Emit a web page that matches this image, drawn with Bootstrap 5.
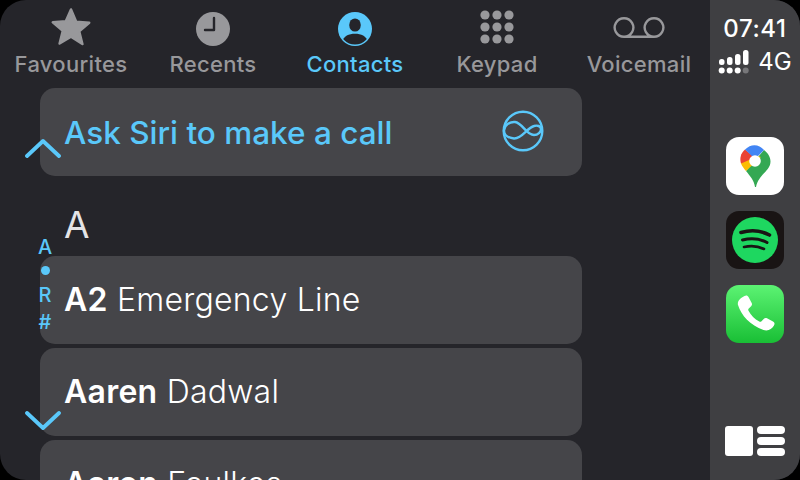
<!DOCTYPE html>
<html lang="en">
<head>
<meta charset="UTF-8" />
<title>Contacts</title>
<meta name="viewport" content="width=device-width, initial-scale=1.0" />
<link href="https://cdn.jsdelivr.net/npm/bootstrap@5.3.0/dist/css/bootstrap.min.css" rel="stylesheet" />
<style>
html, body { width: 800px; height: 480px; overflow: hidden; background: #000; font-family: Inter, "Liberation Sans", sans-serif; }
.carplay { width: 800px; height: 480px; border-radius: 26px; overflow: hidden; background: #25252a; }
.phone-pane { width: 710px; height: 480px; overflow: hidden; }
.tab-item { width: 142px; height: 88px; color: #98989b; padding-top: 8px; }
.tab-item.on { color: #5ac8fa; }
.tab-icon { height: 40px; }
.tab-label { font-size: 22px; font-weight: 500; line-height: 32px; letter-spacing: .3px; white-space: nowrap; }
.contact-list { padding-left: 40px; width: 582px; }
.contact-row { height: 88px; border-radius: 15px; background: #454549; color: #fff; font-size: 32px; font-weight: 300; letter-spacing: .25px; padding: 0 25px 0 24px; margin-bottom: 4px; white-space: nowrap; flex: none; }
.contact-row b { font-weight: 600; }
.siri-row { color: #5ac8fa; font-size: 31.5px; font-weight: 500; letter-spacing: 0; margin-bottom: 0; padding-top: 2px; }
.siri-icon { margin-right: 13px; margin-top: -5px; }
.letter-head { height: 80px; padding: 27px 0 0 24px; color: #e4e4e6; font-size: 37px; line-height: 44px; font-weight: 400; }
.scroll-up, .scroll-down { position: absolute; left: 25px; width: 36px; height: 20px; }
.scroll-up { top: 138px; }
.scroll-down { top: 411px; }
.index-strip { position: absolute; left: 30px; top: 234px; width: 30px; color: #5ac8fa; font-size: 20px; font-weight: 500; line-height: 27px; }
.index-dot { width: 9px; height: 9px; border-radius: 50%; background: #5ac8fa; margin: 5px 0 7px; }
.side-bar { width: 90px; height: 480px; background: #3f3f42; color: #fff; padding-top: 11px; }
.clock { font-size: 24px; line-height: 36px; font-weight: 500; letter-spacing: .6px; }
.signal-line { height: 30px; font-size: 24px; line-height: 30px; gap: 6px; }
.app-tile { width: 58px; height: 58px; border-radius: 13px; overflow: hidden; display: block; }
.app-stack { margin-top: 60px; gap: 16px; }
.layout-btn { margin-top: auto; margin-bottom: 24px; }
</style>
</head>
<body>
<div class="carplay d-flex position-relative">
  <div class="phone-pane position-relative">
    <div class="d-flex">
      <div class="tab-item d-flex flex-column align-items-center">
        <svg class="tab-icon" width="40" height="40" viewBox="0 0 40 40"><path fill="#98989b" stroke="#98989b" stroke-width="2.5" stroke-linejoin="round" d="M20 1.5l5.2 12.2 13 1-10 8.5 3.2 12.8L20 28.6 8.6 35.5l3.2-12.8-10-8.5 13-1z"/></svg>
        <div class="tab-label">Favourites</div>
      </div>
      <div class="tab-item d-flex flex-column align-items-center">
        <svg class="tab-icon" width="40" height="40" viewBox="0 0 40 40"><circle cx="20" cy="21" r="17" fill="#98989b"/><path d="M21 10v12h-9" fill="none" stroke="#25252a" stroke-width="2.4" stroke-linecap="round" stroke-linejoin="round"/></svg>
        <div class="tab-label">Recents</div>
      </div>
      <div class="tab-item on d-flex flex-column align-items-center">
        <svg class="tab-icon" width="40" height="40" viewBox="0 0 40 40"><defs><clipPath id="avatarClip"><circle cx="20" cy="21" r="15.500"/></clipPath></defs><circle cx="20" cy="21" r="17" fill="#5ac8fa"/><g clip-path="url(#avatarClip)" fill="#25252a"><ellipse cx="20" cy="17" rx="5.800" ry="6.600"/><path d="M7 34c1.500-6 7-8.200 13-8.200S31.500 28 33 34c-3 4-8 5-13 5s-10-1-13-5z"/></g></svg>
        <div class="tab-label">Contacts</div>
      </div>
      <div class="tab-item d-flex flex-column align-items-center">
        <svg class="tab-icon" width="40" height="40" viewBox="0 0 40 40" fill="#98989b"><circle cx="8" cy="7" r="4.600"/><circle cx="20" cy="7" r="4.600"/><circle cx="32" cy="7" r="4.600"/><circle cx="8" cy="19" r="4.600"/><circle cx="20" cy="19" r="4.600"/><circle cx="32" cy="19" r="4.600"/><circle cx="8" cy="31" r="4.600"/><circle cx="20" cy="31" r="4.600"/><circle cx="32" cy="31" r="4.600"/></svg>
        <div class="tab-label">Keypad</div>
      </div>
      <div class="tab-item d-flex flex-column align-items-center">
        <svg class="tab-icon" width="52" height="40" viewBox="0 0 52 40"><path fill="none" stroke="#98989b" stroke-width="2.400" d="M11 28.800h30M11 28.800a9.300 9.300 0 1 1 .01 0zM41 28.800a9.300 9.300 0 1 1 .01 0z"/></svg>
        <div class="tab-label">Voicemail</div>
      </div>
    </div>

    <div class="contact-list d-flex flex-column">
      <div class="contact-row siri-row d-flex align-items-center justify-content-between">
        <span>Ask Siri to make a call</span>
        <svg class="siri-icon" width="42" height="42" viewBox="0 0 42 42" fill="none" stroke="#5ac8fa" stroke-width="2.400"><circle cx="21" cy="21" r="19.300"/><path d="M2 20.500C2 15 8 11.500 13 12c7.500.8 11 13 19 13 4 0 7-3 7-6s-4-4-7-3c-7 2-12 13-20 12.500C7 28 2 25.500 2 20.500z"/></svg>
      </div>
      <div class="letter-head">A</div>
      <div class="contact-row d-flex align-items-center"><span><b>A2</b> Emergency Line</span></div>
      <div class="contact-row d-flex align-items-center"><span><b>Aaren</b> Dadwal</span></div>
      <div class="contact-row d-flex align-items-center"><span><b>Aaron</b> Faulkes</span></div>
    </div>

    <svg class="scroll-up" viewBox="0 0 36 20"><path d="M2 18L18 3l16 15" fill="none" stroke="#5ac8fa" stroke-width="3.800" stroke-linecap="round" stroke-linejoin="round"/></svg>
    <div class="index-strip d-flex flex-column align-items-center">
      <span>A</span>
      <span class="index-dot"></span>
      <span>R</span>
      <span>#</span>
    </div>
    <svg class="scroll-down" viewBox="0 0 36 20"><path d="M2 2l16 15L34 2" fill="none" stroke="#5ac8fa" stroke-width="3.800" stroke-linecap="round" stroke-linejoin="round"/></svg>
  </div>

  <div class="side-bar d-flex flex-column align-items-center">
    <div class="clock">07:41</div>
    <div class="signal-line d-flex align-items-center">
      <svg width="34" height="26" viewBox="0 0 34 26" fill="#fff">
        <rect x="1" y="10" width="5.500" height="6" rx="2.500"/><rect x="9" y="8" width="5.500" height="8" rx="2.500"/><rect x="17" y="5" width="5.500" height="11" rx="2.500"/><rect x="25" y="1" width="5.500" height="15" rx="2.500"/>
        <circle cx="3.700" cy="21.500" r="3"/><circle cx="11.700" cy="21.500" r="3"/><circle cx="19.700" cy="21.500" r="3"/><circle cx="27.700" cy="21.500" r="3" fill="#77777a"/>
      </svg>
      <span>4G</span>
    </div>
    <div class="app-stack d-flex flex-column align-items-center">
      <svg class="app-tile" viewBox="0 0 58 58">
        <rect width="58" height="58" fill="#fff"/>
        <path fill="#34a853" d="M29 50c-1-7-5-11-9-16l18-21c4 3 6.500 7 6.500 11.500 0 9.500-12 13-14.500 25.500z"/>
        <path fill="#fbbc04" d="M20 34c-2-2.500-4-5-5-7.500L26 17l9 3z"/>
        <path fill="#ea4335" d="M15 26.500c-1.500-5-.5-10 4-14l10 8z"/>
        <path fill="#4285f4" d="M19 12.500C25 6.500 33 7 38 13l-9 9z"/>
        <circle cx="29" cy="24" r="5.800" fill="#fff"/>
      </svg>
      <svg class="app-tile" viewBox="0 0 58 58">
        <rect width="58" height="58" fill="#191414"/>
        <circle cx="29" cy="29" r="23" fill="#1ed760"/>
        <path fill="none" stroke="#191414" stroke-linecap="round" stroke-width="3.600" d="M15 21.500c9-2.500 20-2 28.500 2.500"/>
        <path fill="none" stroke="#191414" stroke-linecap="round" stroke-width="3" d="M16.500 29c8-2 17-1.500 24.500 2.500"/>
        <path fill="none" stroke="#191414" stroke-linecap="round" stroke-width="2.600" d="M18 36c7-1.500 14-1 20 2"/>
      </svg>
      <svg class="app-tile" viewBox="0 0 58 58">
        <defs><linearGradient id="phoneFill" x1="0" y1="0" x2="0" y2="1"><stop offset="0" stop-color="#5cf373"/><stop offset="1" stop-color="#19bf35"/></linearGradient></defs>
        <rect width="58" height="58" fill="url(#phoneFill)"/>
        <path fill="#fff" d="M18.500 11c1.600-1 3.300-.5 4 1l3.200 6c.6 1.200.3 2.400-.6 3.300l-2.300 2.200c-.7.700-.7 1.400-.3 2.200 2.600 4.700 6 8.200 10.800 10.800.8.400 1.500.4 2.200-.3l2.200-2.300c.9-.9 2.100-1.200 3.300-.6l6 3.200c1.500.7 2 2.400 1 4-2.200 3.800-6 6-10.500 4.500C24 40 15.500 31 12 20c-1-3.800 2.500-7.200 6.500-9z"/>
      </svg>
    </div>
    <svg class="layout-btn" width="60" height="30" viewBox="0 0 60 30" fill="#fff"><rect x="0" y="0" width="28" height="30" rx="3"/><rect x="32" y="0" width="28" height="8" rx="4"/><rect x="32" y="11" width="28" height="8" rx="4"/><rect x="32" y="22" width="28" height="8" rx="4"/></svg>
  </div>
</div>
<script src="https://cdn.jsdelivr.net/npm/bootstrap@5.3.0/dist/js/bootstrap.bundle.min.js"></script>
</body>
</html>
